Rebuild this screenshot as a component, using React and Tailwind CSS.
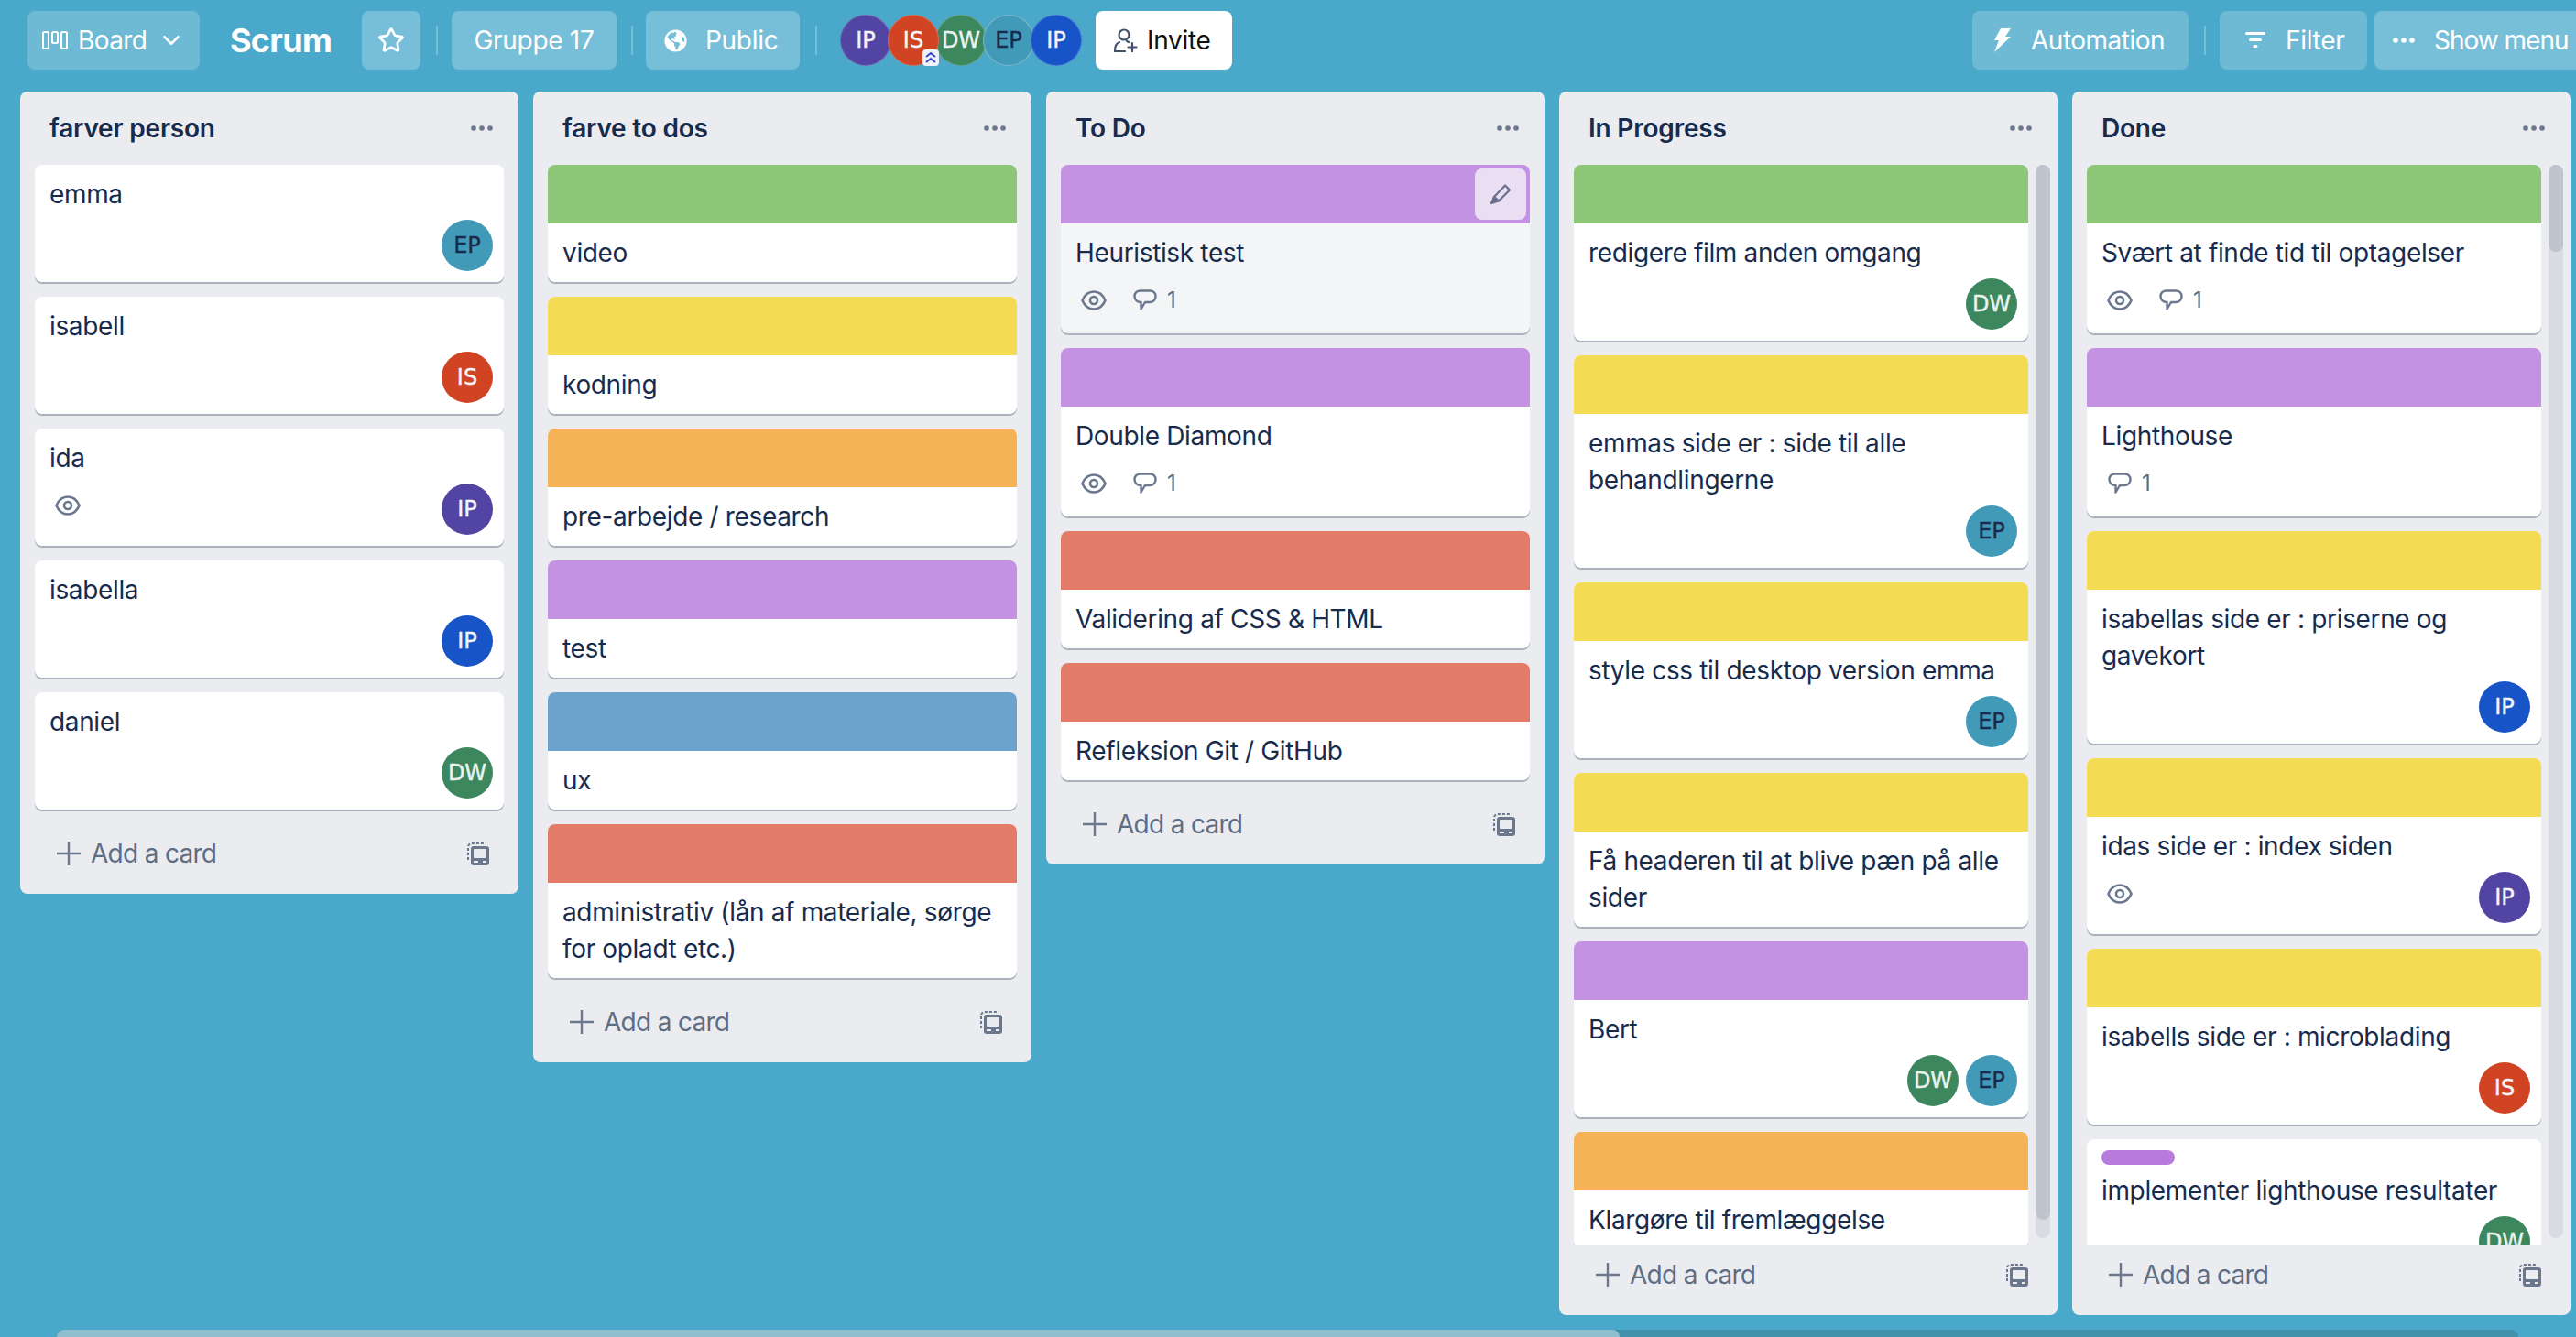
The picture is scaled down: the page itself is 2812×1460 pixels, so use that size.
import { FaGlobeAmericas } from 'react-icons/fa';
import { Star, ChevronDown } from 'lucide-react';

const COVER = {
  green: 'bg-[#8dc678]',
  yellow: 'bg-[#f3db53]',
  orange: 'bg-[#f5b257]',
  purple: 'bg-[#c392e3]',
  red: 'bg-[#e27b68]',
  blue: 'bg-[#6ca3cc]',
};

const PEOPLE = {
  EP: 'bg-[#429ab9] text-[#172b4d]',
  IS: 'bg-[#d04423] text-[#f4f5f7]',
  IP: 'bg-[#5144a3] text-[#f4f5f7]',
  IB: 'bg-[#1654c8] text-[#f4f5f7]',
  DW: 'bg-[#3c875e] text-[#e9f4ee]',
};

const LABEL = { EP: 'EP', IS: 'IS', IP: 'IP', IB: 'IP', DW: 'DW' };

const lists = [
  {
    title: 'farver person',
    cards: [
      { text: 'emma', people: ['EP'] },
      { text: 'isabell', people: ['IS'] },
      { text: 'ida', eye: true, people: ['IP'] },
      { text: 'isabella', people: ['IB'] },
      { text: 'daniel', people: ['DW'] },
    ],
  },
  {
    title: 'farve to dos',
    cards: [
      { cover: 'green', text: 'video' },
      { cover: 'yellow', text: 'kodning' },
      { cover: 'orange', text: 'pre-arbejde / research' },
      { cover: 'purple', text: 'test' },
      { cover: 'blue', text: 'ux' },
      { cover: 'red', text: 'administrativ (lån af materiale, sørge\nfor opladt etc.)' },
    ],
  },
  {
    title: 'To Do',
    cards: [
      { cover: 'purple', text: 'Heuristisk test', eye: true, comments: 1, hover: true },
      { cover: 'purple', text: 'Double Diamond', eye: true, comments: 1 },
      { cover: 'red', text: 'Validering af CSS & HTML' },
      { cover: 'red', text: 'Refleksion Git / GitHub' },
    ],
  },
  {
    title: 'In Progress',
    thumb: 'h-[1152px]',
    cards: [
      { cover: 'green', text: 'redigere film anden omgang', people: ['DW'] },
      { cover: 'yellow', text: 'emmas side er : side til alle\nbehandlingerne', people: ['EP'] },
      { cover: 'yellow', text: 'style css til desktop version emma', people: ['EP'] },
      { cover: 'yellow', text: 'Få headeren til at blive pæn på alle\nsider' },
      { cover: 'purple', text: 'Bert', people: ['DW', 'EP'] },
      { cover: 'orange', text: 'Klargøre til fremlæggelse' },
    ],
  },
  {
    title: 'Done',
    thumb: 'h-[95px]',
    cards: [
      { cover: 'green', text: 'Svært at finde tid til optagelser', eye: true, comments: 1 },
      { cover: 'purple', text: 'Lighthouse', comments: 1 },
      { cover: 'yellow', text: 'isabellas side er : priserne og\ngavekort', people: ['IB'] },
      { cover: 'yellow', text: 'idas side er : index siden', eye: true, people: ['IP'] },
      { cover: 'yellow', text: 'isabells side er : microblading', people: ['IS'] },
      { pill: true, text: 'implementer lighthouse resultater', people: ['DW'] },
    ],
  },
];

function BoardIcon() {
  return (
    <svg width="28" height="20" viewBox="0 0 28 20" fill="none" stroke="white" strokeWidth="2">
      <rect x="1" y="1" width="6" height="18" rx="1.5" />
      <rect x="11" y="1" width="6" height="12" rx="1.5" />
      <rect x="21" y="1" width="6" height="18" rx="1.5" />
    </svg>
  );
}

function BoltIcon() {
  return (
    <svg width="20" height="26" viewBox="0 0 20 26" fill="white">
      <path d="M8 0h11l-6 9h6L1 26l5-13H1z" />
    </svg>
  );
}

function FilterIcon() {
  return (
    <svg width="22" height="18" viewBox="0 0 22 18" fill="white">
      <rect x="0" y="0" width="22" height="3" rx="1.5" />
      <rect x="4" y="7" width="14" height="3" rx="1.5" />
      <rect x="8.500" y="14" width="5" height="3" rx="1.5" />
    </svg>
  );
}

function Dots({ color = '#6b778c' }) {
  return (
    <svg width="24" height="6" viewBox="0 0 24 6" fill={color}>
      <circle cx="3" cy="3" r="2.800" />
      <circle cx="12" cy="3" r="2.800" />
      <circle cx="21" cy="3" r="2.800" />
    </svg>
  );
}

function InviteIcon() {
  return (
    <svg width="27" height="26" viewBox="0 0 27 26" fill="none" stroke="#42526e" strokeWidth="2.200" strokeLinecap="round">
      <circle cx="12" cy="7" r="5.500" />
      <path d="M2 25c0-6 2-9 5-10M15 14l2 1" />
      <path d="M2 25h11M21 16v9M16.500 20.500h9" />
    </svg>
  );
}

function EyeIcon() {
  return (
    <svg width="28" height="22" viewBox="0 0 28 22" fill="none" stroke="#6b778c" strokeWidth="2.600">
      <path d="M1.500 11C4 5 8.500 1.500 14 1.500S24 5 26.500 11C24 17 19.500 20.500 14 20.500S4 17 1.500 11z" />
      <circle cx="14" cy="11" r="4" />
    </svg>
  );
}

function CommentIcon() {
  return (
    <svg width="26" height="24" viewBox="0 0 26 24" fill="none" stroke="#6b778c" strokeWidth="2.400" strokeLinejoin="round">
      <path d="M8 1.500h10c4 0 6.500 2.500 6.500 6s-2.500 6.500-6.500 6.500h-5l-4.500 7.500V14C4 14 1.500 11 1.500 7.500S4 1.500 8 1.500z" />
    </svg>
  );
}

function PencilIcon() {
  return (
    <svg width="24" height="24" viewBox="0 0 24 24" fill="none" stroke="#6b6f8f" strokeWidth="2.200" strokeLinejoin="round">
      <path d="M5 15 17 2.500l5 5L10 19.500z" />
      <path d="M5 15 2 22l8-2.500z" fill="#6b6f8f" />
    </svg>
  );
}

function TemplateIcon() {
  return (
    <svg width="24" height="26" viewBox="0 0 24 26" fill="none">
      <path d="M1 20V6a4 4 0 0 1 4-4h14" stroke="#6b778c" strokeWidth="2" strokeDasharray="3 2" />
      <rect x="4" y="5" width="20" height="21" rx="3" fill="#6b778c" />
      <rect x="7" y="8" width="14" height="10" rx="1" fill="#ebecf0" />
      <rect x="7" y="21" width="5" height="2" fill="#ebecf0" />
      <rect x="17" y="21" width="4" height="2" fill="#ebecf0" />
    </svg>
  );
}

function PlusIcon() {
  return (
    <svg width="26" height="26" viewBox="0 0 26 26" stroke="#6b778c" strokeWidth="2.400">
      <path d="M13 0v26M0 13h26" />
    </svg>
  );
}

function Avatar({ who, className = '' }) {
  return (
    <div className={`w-14 h-14 shrink-0 rounded-full flex items-center justify-center font-['DejaVu_Sans',sans-serif] text-[24px] [-webkit-text-stroke:0.4px] ${PEOPLE[who]} ${className}`}>
      {LABEL[who]}
    </div>
  );
}

function Divider({ className = '' }) {
  return <div className={`w-[2px] h-8 bg-white/25 shrink-0 ${className}`} />;
}

function Card({ card }) {
  const hasRow = card.people || card.eye || card.comments;
  return (
    <div className={`relative rounded-lg shadow-[0_2px_0_rgba(9,30,66,0.28)] shrink-0 ${card.hover ? 'bg-[#f4f5f7]' : 'bg-white'}`}>
      {card.cover && <div className={`h-16 rounded-t-lg ${COVER[card.cover]}`} />}
      {card.hover && (
        <div className="absolute top-1 right-1 w-14 h-14 rounded-lg bg-[#eadff2] flex items-center justify-center">
          <PencilIcon />
        </div>
      )}
      <div className="px-4 pt-3 pb-3">
        {card.pill && <div className="w-20 h-4 mb-2 rounded-lg bg-[#b97bdb]" />}
        <div className="text-[28px] leading-10 tracking-[-0.35px] text-[#172b4d] whitespace-pre">{card.text}</div>
        {hasRow && (
          <div className="mt-2 min-h-12 flex justify-between -mr-1">
            <div className="flex pt-1 h-12 gap-4">
              {card.eye && (
                <div className="w-10 h-10 flex items-center justify-center">
                  <EyeIcon />
                </div>
              )}
              {card.comments && (
                <div className="flex items-center h-10">
                  <div className="w-10 h-10 flex items-center justify-center">
                    <CommentIcon />
                  </div>
                  <span className="ml-1 text-[24px] text-[#5e6c84]">{card.comments}</span>
                </div>
              )}
            </div>
            {card.people && (
              <div className="flex gap-2">
                {card.people.map((p) => (
                  <Avatar key={p} who={p} />
                ))}
              </div>
            )}
          </div>
        )}
      </div>
    </div>
  );
}

function List({ list }) {
  const scrolls = !!list.thumb;
  return (
    <section className={`w-[544px] shrink-0 rounded-lg bg-[#ebecf0] flex flex-col ${scrolls ? 'h-[1336px]' : ''}`}>
      <header className="h-20 shrink-0 pl-8 pr-7 flex items-center justify-between">
        <h2 className="text-[28px] font-semibold tracking-[-0.2px] text-[#172b4d]">{list.title}</h2>
        <Dots />
      </header>
      {scrolls ? (
        <div className="flex-1 min-h-0 flex pl-4 pr-2 gap-2">
          <div className="w-[496px] overflow-hidden flex flex-col gap-4">
            {list.cards.map((c) => (
              <Card key={c.text} card={c} />
            ))}
          </div>
          <div className="w-4 mb-2 rounded-lg bg-[#d9dbe3]">
            <div className={`${list.thumb} rounded-lg bg-[#bfc3cb]`} />
          </div>
        </div>
      ) : (
        <div className="px-4 pb-4 flex flex-col gap-4">
          {list.cards.map((c) => (
            <Card key={c.text} card={c} />
          ))}
        </div>
      )}
      <footer className="h-[76px] shrink-0 pl-10 pr-8 pb-3 flex items-center justify-between">
        <div className="flex items-center gap-[11px] text-[28px] tracking-[-0.7px] text-[#5e6c84]">
          <PlusIcon />
          <span>Add a card</span>
        </div>
        <TemplateIcon />
      </footer>
    </section>
  );
}

export default function App() {
  return (
    <div className="w-[2812px] h-[1460px] overflow-hidden flex flex-col bg-[#4aa9cb] font-['Inter','Noto_Sans',sans-serif]">
      <nav className="h-[100px] shrink-0 pt-3 pl-[30px] text-white">
        <div className="h-16 flex items-center text-[28px] tracking-[-0.3px]">
          <div className="w-[188px] h-16 rounded-lg bg-white/20 pl-4 flex items-center">
            <BoardIcon />
            <span className="ml-[11px] tracking-[-0.6px]">Board</span>
            <ChevronDown size={30} strokeWidth={2} className="ml-[12px]" />
          </div>
          <h1 className="ml-[33px] w-[111px] text-[36px] font-bold tracking-[-0.7px]">Scrum</h1>
          <div className="ml-[33px] w-16 h-16 rounded-lg bg-white/25 flex items-center justify-center">
            <Star size={30} strokeWidth={2.2} />
          </div>
          <Divider className="ml-[17px]" />
          <div className="ml-[15px] w-[180px] h-16 rounded-lg bg-white/25 flex items-center justify-center">Gruppe 17</div>
          <Divider className="ml-[16px]" />
          <div className="ml-[14px] w-[168px] h-16 rounded-lg bg-white/25 pl-5 flex items-center">
            <FaGlobeAmericas size={25} />
            <span className="ml-5">Public</span>
          </div>
          <Divider className="ml-[17px]" />
          <div className="ml-[25px] flex tracking-normal">
            <Avatar who="IP" className="border border-white/20" />
            <div className="relative -ml-1">
              <Avatar who="IS" className="border border-white/20" />
              <div className="absolute right-0 bottom-0 w-[18px] h-[18px] rounded-[4px] bg-[#eef0fa] flex items-center justify-center">
                <svg width="14" height="14" viewBox="0 0 14 14" fill="none" stroke="#3a46c0" strokeWidth="2">
                  <path d="M2 6l5-4 5 4M2 12l5-4 5 4" />
                </svg>
              </div>
            </div>
            <Avatar who="DW" className="-ml-1 border border-white/20" />
            <Avatar who="EP" className="-ml-1 border border-white/30" />
            <Avatar who="IB" className="-ml-1 border border-white/20" />
          </div>
          <div className="ml-[15px] w-[149px] h-16 rounded-lg bg-white text-[#111] pl-[19px] flex items-center">
            <InviteIcon />
            <span className="ml-[10px]">Invite</span>
          </div>
          <div className="ml-auto flex items-center">
            <div className="w-[236px] h-16 rounded-lg bg-white/20 pl-[23px] flex items-center">
              <BoltIcon />
              <span className="ml-[21px] tracking-[-0.5px]">Automation</span>
            </div>
            <Divider className="ml-[17px]" />
            <div className="ml-[15px] w-[161px] h-16 rounded-lg bg-white/20 pl-7 flex items-center">
              <FilterIcon />
              <span className="ml-[22px]">Filter</span>
            </div>
            <div className="ml-2 w-[220px] h-16 rounded-l-lg bg-white/25 pl-5 flex items-center">
              <Dots color="white" />
              <span className="ml-[21px] whitespace-nowrap tracking-[-1px]">Show menu</span>
            </div>
          </div>
        </div>
      </nav>
      <main className="flex-1 min-h-0 flex items-start gap-4 pl-[22px]">
        {lists.map((l) => (
          <List key={l.title} list={l} />
        ))}
      </main>
      <div className="h-2 shrink-0 pl-[62px] pr-[63px]">
        <div className="h-2 rounded-t-lg bg-[#4192aa]">
          <div className="w-[1706px] h-2 rounded-t-lg bg-[#8fbfcd]" />
        </div>
      </div>
    </div>
  );
}
